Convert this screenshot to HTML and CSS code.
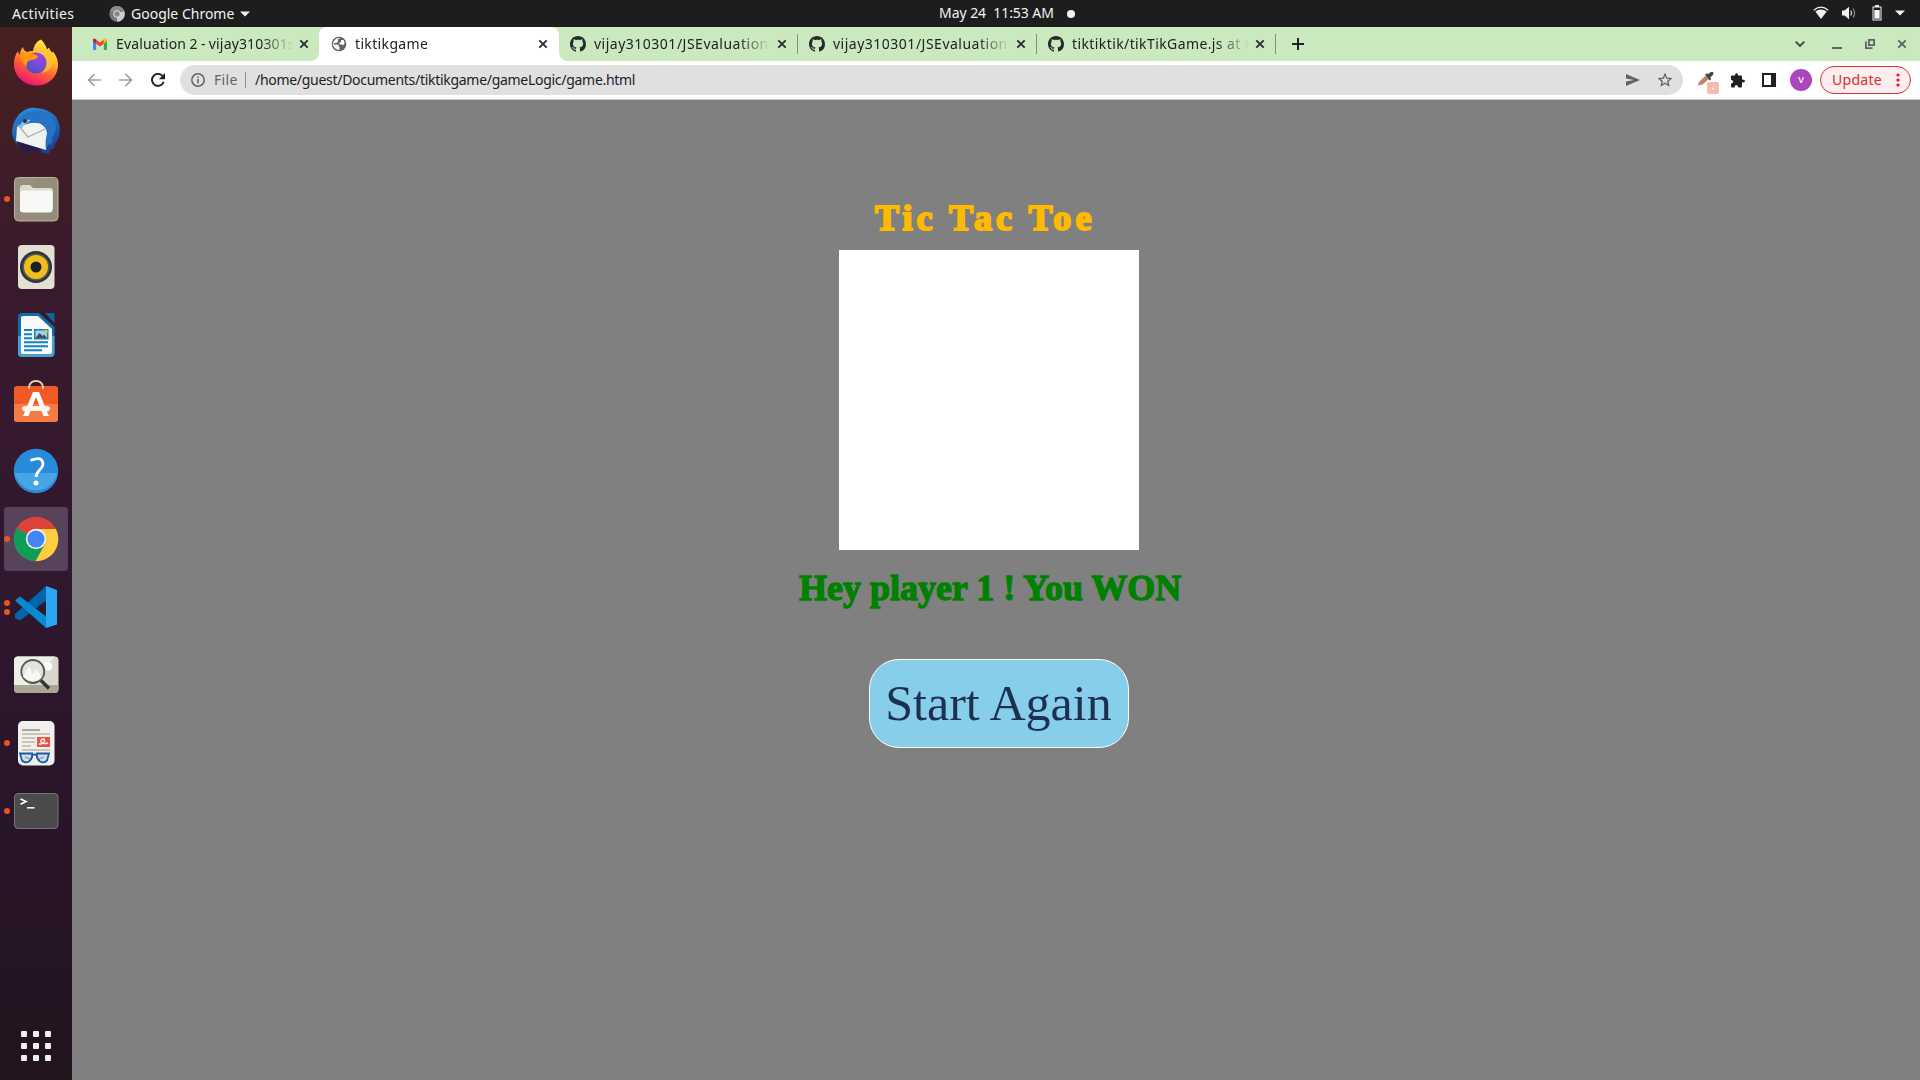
FILE: index.html
```html
<!DOCTYPE html>
<html lang="en">
<head>
<meta charset="utf-8">
<title>tiktikgame</title>
<link rel="stylesheet" href="styles.css">
</head>
<body>
<svg class="sprite" aria-hidden="true">
  <symbol id="close" viewBox="0 0 10 10"><path d="M1.3 1.3l7.4 7.4M8.7 1.3L1.3 8.7" stroke="currentColor" stroke-width="1.9"/></symbol>
  <symbol id="github" viewBox="0 0 16 16"><path fill="#24292f" d="M8 0C3.58 0 0 3.58 0 8c0 3.54 2.29 6.53 5.47 7.59.4.07.55-.17.55-.38 0-.19-.01-.82-.01-1.49-2.01.37-2.53-.49-2.69-.94-.09-.23-.48-.94-.82-1.13-.28-.15-.68-.52-.01-.53.63-.01 1.08.58 1.23.82.72 1.21 1.87.87 2.33.66.07-.52.28-.87.51-1.07-1.78-.2-3.64-.89-3.64-3.95 0-.87.31-1.59.82-2.15-.08-.2-.36-1.02.08-2.12 0 0 .67-.21 2.2.82.64-.18 1.32-.27 2-.27s1.36.09 2 .27c1.53-1.04 2.2-.82 2.2-.82.44 1.1.16 1.92.08 2.12.51.56.82 1.27.82 2.15 0 3.07-1.87 3.75-3.65 3.95.29.25.54.73.54 1.48 0 1.07-.01 1.93-.01 2.2 0 .21.15.46.55.38A8.01 8.01 0 0016 8c0-4.42-3.58-8-8-8z"/></symbol>
</svg>

<header class="topbar">
  <div class="topbar-left">
    <span class="activities">Activities</span>
    <svg class="mono-chrome" width="16" height="16" viewBox="0 0 16 16"><circle cx="8" cy="8" r="7.7" fill="#777"/><path d="M8 8l7-3.5A7.7 7.7 0 018 15.7z" fill="#c9c9c9"/><path d="M8 8L1 4.5A7.7 7.7 0 0115 4.5H8z" fill="#8c8c8c"/><circle cx="8" cy="8" r="3.7" fill="#ddd"/><circle cx="8" cy="8" r="2.7" fill="#888"/></svg>
    <span class="appname">Google Chrome</span>
    <svg width="10" height="6" viewBox="0 0 10 6"><path d="M0 .5h10L5 5.5z" fill="#f2f2f2"/></svg>
  </div>
  <div class="clock"><span class="date">May 24&nbsp; 11:53 AM</span><i class="notify"></i></div>
  <div class="tray">
    <svg width="16" height="14" viewBox="0 0 16 14"><path d="M.8 4.2Q8-1.8 15.200 4.200" fill="none" stroke="#f2f2f2" stroke-width="1.300"/><path d="M2.300 5.600Q8 1.200 13.700 5.600L8 13z" fill="#f2f2f2"/></svg>
    <svg width="16" height="14" viewBox="0 0 16 14"><path d="M1 4.500h2.500L8 .8v12.400L3.500 9.500H1z" fill="#f2f2f2"/><path d="M9.800 4.500q1.600 2.500 0 5" fill="none" stroke="#ddd" stroke-width="1.300"/><path d="M12 2.500q3.200 4.500 0 9" fill="none" stroke="#888" stroke-width="1.200"/></svg>
    <svg width="10" height="16" viewBox="0 0 10 16"><path d="M3 0h4v1.500h2.500v14H.5v-14H3z" fill="#f2f2f2"/><path d="M1.500 2.500h7v12h-7z" fill="#1d1d1d"/><path d="M2.300 5h5.400v8.700H2.300z" fill="#f2f2f2"/></svg>
    <svg width="10" height="6" viewBox="0 0 10 6"><path d="M0 .5h10L5 5.500z" fill="#f2f2f2"/></svg>
  </div>
</header>

<div class="desktop">
  <nav class="dock">
    <div class="app"><svg width="48" height="48" viewBox="0 0 48 48">
      <defs><linearGradient id="fx" x1=".75" y1="0" x2=".3" y2="1"><stop offset="0" stop-color="#fff44f"/><stop offset=".35" stop-color="#ffb52b"/><stop offset=".65" stop-color="#ff5a36"/><stop offset="1" stop-color="#e8107c"/></linearGradient><radialGradient id="fxb" cx=".65" cy=".25" r=".8"><stop offset="0" stop-color="#a43cf0"/><stop offset=".6" stop-color="#6b4fd0"/><stop offset="1" stop-color="#4a52c0"/></radialGradient></defs>
      <path d="M29 .5c3 3 5 6 6 10l2-2c.5 2 1.500 3 3 5l1-1c4 5 5.500 10 5 15C45 39 36 46.500 24.500 46.500S3 38 2 27c-.5-6 1-11 4-15 .5 2 1 3 1.500 4C8.500 12 9 10 11 8c.5 3 2 4 4 5 2-1 4-1 6-1C22 6 25 2 29 .5z" fill="url(#fx)"/>
      <circle cx="24" cy="24" r="10.500" fill="url(#fxb)"/>
      <path d="M8 17c4-3 8-4 14-2l4 2c-1 3-4 4-7 4-4 1-5 4-4 7-4-3-6-7-7-11z" fill="#ff980e"/>
      <path d="M24 14c6-1 10 3 10.500 8 .5 6-2 9-5 12 8-1 13-8 12-16-1-5-5-8-9-9" fill="#ffc533" opacity=".7"/>
    </svg></div>
    <div class="app"><svg width="48" height="48" viewBox="0 0 48 48">
      <defs><linearGradient id="tb" x1=".3" y1="0" x2=".6" y2="1"><stop offset="0" stop-color="#2a8bd8"/><stop offset=".5" stop-color="#1d63b4"/><stop offset="1" stop-color="#1c3e92"/></linearGradient></defs>
      <path d="M18 1c11-1 21 3 26 9 5 8 5 17 1 24l-2 2-1 5-4 2-1 4-6-1-15-2C7 42 0 34 0 24 1 13 8 3 18 1z" fill="url(#tb)"/>
      <path d="M4 34c3 6 7 10 12 13 2 0 1-2 0-3l14 2-2-5z" fill="#281b4a"/>
      <path d="M12 16l20-1 4 9-2 19L4 34l1-14z" fill="#f1f1f2"/><path d="M6 18l10 12 17-8" fill="none" stroke="#aaa" stroke-width="1.200"/>
      <path d="M5 17C9 8 17 3 26 4c10 1 18 8 18 17-1 6-4 9-5 12l3-1-4 6-1-2-3 6c-1-7 0-10 1-16-1-8-8-11-16-10-5 1-7 3-14 1z" fill="#2573c3"/><path d="M7 21c2-7 6-9 12-8-3 3-7 4-9 8z" fill="#79c3ec"/><circle cx="13" cy="14" r="2" fill="#302f3f"/>
    </svg></div>
    <div class="app"><i class="run"></i><svg width="48" height="48" viewBox="0 0 48 48">
      <rect x="2.500" y="2.500" width="43.500" height="43.500" rx="4" fill="#999180" stroke="#b9b29e"/><path d="M3 25L26 3h19v42H3z" fill="#8d8674" opacity=".35"/><path d="M8 13q0-3 3-3h7l3 3h17q3 0 3 3v18H8z" fill="#dedacf"/><rect x="8" y="15.500" width="32.500" height="22" rx="3" fill="#f8f8f7"/>
    </svg></div>
    <div class="app"><svg width="48" height="48" viewBox="0 0 48 48">
      <rect x="6" y="2" width="36.500" height="44" rx="4" fill="#e3dfd3"/><circle cx="24" cy="24" r="16" fill="#30343b"/><circle cx="24" cy="24" r="13.500" fill="#555860"/><circle cx="24" cy="24" r="12" fill="#eec018"/><circle cx="24" cy="24" r="5.500" fill="#1c2026"/>
    </svg></div>
    <div class="app"><svg width="48" height="48" viewBox="0 0 48 48">
      <path d="M10 2h17l15.500 14v26q0 4-4 4H10q-4 0-4-4V6q0-4 4-4z" fill="#0d6fa8"/><path d="M6 25h36.500v17q0 4-4 4H10q-4 0-4-4z" fill="#47a0d3"/><path d="M11 5h15l14 13v23q0 2-2 2H11q-2 0-2-2V7q0-2 2-2z" fill="#f7f9fa"/><path d="M33 2h8q1.500 0 1.500 1.500V12z" fill="#0c679d"/><path d="M12 19h8M12 23.300h8M12 27.300h8M12 31.300h24M12 35.300h24M12 39.300h18" stroke="#1681bd" stroke-width="1.900"/><rect x="22" y="18" width="14.500" height="10.500" fill="#1681bd"/><path d="M23.500 19.500H35v7.500H23.500z" fill="#9dd1ee"/><path d="M23.500 27l4-5 3 3 1.500-1.500 3 3.500z" fill="#454b50"/><circle cx="34" cy="20.500" r="1.800" fill="#efc32d"/>
    </svg></div>
    <div class="app"><svg width="48" height="48" viewBox="0 0 48 48">
      <rect x="2" y="7" width="44" height="36" rx="3" fill="#f15a24"/><path d="M2 25h44v15q0 3-3 3H5q-3 0-3-3z" fill="#f57b45"/><path d="M17 10V8q1-6 7-6t7 6v2" fill="none" stroke="#e9d4ae" stroke-width="1.800"/><path d="M21 13h6l10 24h-5.500L24 18l-7.500 19H11z" fill="#fff"/><rect x="10" y="27" width="28" height="5" rx="2.500" fill="#fff3ec"/>
    </svg></div>
    <div class="app"><svg width="48" height="48" viewBox="0 0 48 48">
      <circle cx="24" cy="24" r="22.200" fill="#278bda"/><path d="M2.500 26h43A22 22 0 012.500 26z" fill="#48a5e5"/><path d="M18.500 13.500q12-5 12.500 3.500c0 6-7 6-7 13" fill="none" stroke="#fff" stroke-width="2.800"/><circle cx="24" cy="36" r="2.500" fill="#fff"/>
    </svg></div>
    <div class="app active"><i class="run"></i><svg width="48" height="48" viewBox="0 0 48 48">
      <circle cx="24" cy="24" r="22.200" fill="#db4437"/><path d="M24 24L4.800 12.900A22.200 22.200 0 0023.500 46.200l9-16z" fill="#0f9d58"/><path d="M24 14h19.900A22.200 22.200 0 0123.500 46.200L33 29z" fill="#ffcd40"/><circle cx="24" cy="24" r="10.200" fill="#f1f1f1"/><circle cx="24" cy="24" r="8.600" fill="#4285f4"/>
    </svg></div>
    <div class="app"><i class="run two"></i><svg width="48" height="48" viewBox="0 0 48 48">
      <path d="M34 3L3 31v4l5 2.500L36 16z" fill="#0065a9"/><path d="M3.500 17l4.500-3.500L36 35l-2 10L3.500 18z" fill="#078bd0"/><path d="M34 3l11 4v34.500L34 45z" fill="#2aa7f3"/>
    </svg></div>
    <div class="app"><svg width="48" height="48" viewBox="0 0 48 48">
      <rect x="2" y="5.500" width="44.500" height="36.500" rx="4" fill="#d7d7cb"/><path d="M6 5.500h37L17 34H2V10q0-4.500 4-4.500z" fill="#efefe8"/><path d="M2 34h44.500v4q0 4-4 4H6q-4 0-4-4z" fill="#aaa595"/><circle cx="36" cy="15.500" r="4.500" fill="#fcfcf8"/><circle cx="20.800" cy="20.500" r="11.500" fill="#e4e4dd" stroke="#53565a" stroke-width="1.800"/><path d="M11 26l6-11 4 8 3-5 6 8q-8 8-19 0z" fill="#f8f8f3"/><path d="M29 29.500l8 8" stroke="#333638" stroke-width="3.500"/>
    </svg></div>
    <div class="app"><i class="run"></i><svg width="48" height="48" viewBox="0 0 48 48">
      <rect x="6" y="2" width="36.500" height="44.500" rx="5" fill="#f0f0ef"/><path d="M10 11h18" stroke="#aea68f" stroke-width="2"/><path d="M10 15h28M10 19h13M10 23h13M10 27h9M10 31h28" stroke="#c9c4b5" stroke-width="2"/><rect x="25" y="18" width="13" height="10" fill="#f24f43"/><path d="M27 25c4 1 8-5 4-5-4 1-3 6 5 4" fill="none" stroke="#fff" stroke-width="1.300"/><path d="M8 34.500h12q1 5-3 8-4 2-7-1zM37 34.500H25q-1 5 3 8 4 2 7-1zM20 36q2.500-1 5 0" fill="#d8dadc" stroke="#165ba8" stroke-width="1.800"/><path d="M13 38l5 2M32 38l-5 2" stroke="#888" stroke-width="1"/>
    </svg></div>
    <div class="app"><i class="run"></i><svg width="48" height="48" viewBox="0 0 48 48">
      <rect x="2.500" y="6.500" width="43.500" height="35" rx="3.500" fill="#4b4b4b" stroke="#747474"/><path d="M8.500 12l5.500 2.600-5.500 2.600" fill="none" stroke="#fff" stroke-width="1.700"/><path d="M15 20.800h7.500" stroke="#fff" stroke-width="1.500"/>
    </svg></div>
    <svg class="grid-icon" width="30" height="30" viewBox="0 0 30 30" fill="#eeeeec"><rect width="6" height="6" rx="1"/><rect x="12" width="6" height="6" rx="1"/><rect x="24" width="6" height="6" rx="1"/><rect y="12" width="6" height="6" rx="1"/><rect x="12" y="12" width="6" height="6" rx="1"/><rect x="24" y="12" width="6" height="6" rx="1"/><rect y="24" width="6" height="6" rx="1"/><rect x="12" y="24" width="6" height="6" rx="1"/><rect x="24" y="24" width="6" height="6" rx="1"/></svg>
  </nav>

  <div class="browser">
    <div class="tabs">
      <div class="tab">
        <svg class="fav" width="16" height="16" viewBox="0 0 16 16"><path d="M1 4l3.200 2.200V14H2q-1 0-1-1z" fill="#4285f4"/><path d="M15 4l-3.200 2.200V14H14q1 0 1-1z" fill="#34a853"/><path d="M4.200 3.500L8 6.400l3.800-2.900v4.200L8 10.500 4.200 7.700z" fill="#ea4335"/><path d="M1 4q0-2 2-1.300l1.200.9v4.100L1 5.300z" fill="#c5221f"/><path d="M15 4q0-2-2-1.300l-1.200.9v4.100L15 5.300z" fill="#fbbc04"/></svg>
        <span class="tab-title t1">Evaluation 2 - vijay310301s</span><svg class="x" width="10" height="10"><use href="#close"/></svg>
      </div>
      <div class="tab current">
        <svg class="fav" width="16" height="16" viewBox="0 0 16 16"><circle cx="8" cy="8" r="7.300" fill="#5f6368"/><path d="M9.500 2.200L7 3.500v2L5.500 7H3.200L2.500 8.500h5V10l1 1v3l-3-.6-3-3-.7-2L2.600 5.300l3-3z" fill="#fff" opacity=".95"/><path d="M10 4h2.500l1.300 3L12 9.500l-1-1H9L8 7l2-1z" fill="#fff"/></svg>
        <span class="tab-title t2">tiktikgame</span><svg class="x" width="10" height="10"><use href="#close"/></svg>
      </div>
      <div class="tab">
        <svg class="fav" width="16" height="16"><use href="#github"/></svg>
        <span class="tab-title t3">vijay310301/JSEvaluation-</span><svg class="x" width="10" height="10"><use href="#close"/></svg>
      </div>
      <div class="tab sep">
        <svg class="fav" width="16" height="16"><use href="#github"/></svg>
        <span class="tab-title t3">vijay310301/JSEvaluation-</span><svg class="x" width="10" height="10"><use href="#close"/></svg>
      </div>
      <div class="tab sep">
        <svg class="fav" width="16" height="16"><use href="#github"/></svg>
        <span class="tab-title t5">tiktiktik/tikTikGame.js at r</span><svg class="x" width="10" height="10"><use href="#close"/></svg>
      </div>
      <div class="newtab sep"><svg width="12" height="12" viewBox="0 0 12 12"><path d="M6 0v12M0 6h12" stroke="#202124" stroke-width="2"/></svg></div>
      <div class="window-controls">
        <svg width="10" height="6" viewBox="0 0 10 6"><path d="M.7.700L5 5 9.300.700" fill="none" stroke="#3c4043" stroke-width="1.800"/></svg>
        <svg width="10" height="10" viewBox="0 0 10 10"><path d="M0 9h10" stroke="#5f6368" stroke-width="2"/></svg>
        <svg width="10" height="10" viewBox="0 0 10 10" fill="none" stroke="#5f6368" stroke-width="1.800"><path d="M3.900.900h5.200v5.200H3.900zM.9 2.500v6.600h6.600"/></svg>
        <svg class="wclose" width="10" height="10"><use href="#close"/></svg>
      </div>
    </div>

    <div class="toolbar">
      <div class="nav">
        <svg width="14" height="14" viewBox="0 0 14 14"><path d="M14 7H1.500M7.500 1L1.500 7l6 6" fill="none" stroke="#a0a0a1" stroke-width="1.700"/></svg>
        <svg width="14" height="14" viewBox="0 0 14 14"><path d="M0 7h12.500M6.500 1l6 6-6 6" fill="none" stroke="#a0a0a1" stroke-width="1.700"/></svg>
        <svg width="14" height="14" viewBox="0 0 14 14"><path d="M11.600 3A6 6 0 1012.700 8.800" fill="none" stroke="#202124" stroke-width="1.900"/><path d="M14 0v6.200H7.800z" fill="#202124"/></svg>
      </div>
      <div class="omnibox">
        <svg width="14" height="14" viewBox="0 0 14 14"><circle cx="7" cy="7" r="6.200" fill="none" stroke="#5f6368" stroke-width="1.500"/><path d="M7 6v4.500M7 3.400v1.500" stroke="#5f6368" stroke-width="1.500"/></svg>
        <span class="scheme">File</span><i class="bar"></i><span class="url">/home/guest/Documents/tiktikgame/gameLogic/game.html</span>
        <svg class="send" width="14" height="12" viewBox="0 0 14 12"><path d="M0 0l14 6-14 6V7.500L8 6 0 4.500z" fill="#5f6368"/></svg>
        <svg width="14" height="14" viewBox="0 0 14 14"><path d="M7 1.300l1.700 3.900 4.200.4-3.200 2.800 1 4.100L7 10.300l-3.700 2.200 1-4.100L1.100 5.600l4.200-.4z" fill="none" stroke="#5f6368" stroke-width="1.300"/></svg>
      </div>
      <div class="actions">
        <svg class="picker" width="24" height="24" viewBox="0 0 24 24"><path d="M3.500 17l1-3L11 7.500l3 3L7.500 16z" fill="#d77a60" stroke="#999" stroke-width="1"/><path d="M10 6l2-.5 1.500.5L15 4.500q3-1.500 3.500.5 0 1.500-1.500 3l-1.500 1 .5 2.500-1.500 1z" fill="#454545"/><rect x="12" y="14" width="12" height="12" rx="2" fill="#f8bbb0"/><circle cx="18" cy="20.500" r="1" fill="#fff"/></svg>
        <svg class="puzzle" width="15" height="15" viewBox="0 0 15 15"><path d="M1 3.500q0-1 1-1h3q-.2-2.300 1.500-2.300T8 2.500h3q1 0 1 1v3q3-.2 3 1.500t-3 1.500v4q0 1-1 1H8.200q0-2.500-1.800-2.500T4.600 14.500H2q-1 0-1-1v-3q2.200 0 2.200-1.800T1 7z" fill="#202124"/></svg>
        <svg class="panel" width="14" height="14" viewBox="0 0 14 14"><path d="M0 0h14v14H0zM2 2v10h7V2z" fill="#202124" fill-rule="evenodd"/></svg>
        <span class="avatar">v</span>
        <div class="update"><span>Update</span><svg width="4" height="14" viewBox="0 0 4 14" fill="#d21e1c"><circle cx="2" cy="2" r="1.600"/><circle cx="2" cy="7" r="1.600"/><circle cx="2" cy="12" r="1.600"/></svg></div>
      </div>
    </div>

    <main class="page">
      <h1 class="heading">Tic Tac Toe</h1>
      <div class="board"></div>
      <h1 class="result">Hey player 1 ! You WON</h1>
      <button class="again">Start Again</button>
    </main>
  </div>
</div>
</body>
</html>
```
FILE: styles.css
```css
* { box-sizing: border-box; }
body { margin: 0; width: 1920px; height: 1080px; overflow: hidden; display: flex; flex-direction: column; font-family: "Noto Sans", sans-serif; font-size: 14px; color: #202124; }
svg { display: block; flex: none; }
span { white-space: nowrap; }
.sprite { position: absolute; width: 0; height: 0; }

.topbar { height: 27px; flex: none; display: grid; grid-template-columns: 1fr auto 1fr; align-items: center; background: #1d1d1d; color: #f2f2f2; }
.topbar-left { display: flex; align-items: center; padding-left: 12px; }
.activities { width: 97px; letter-spacing: 0.4px; }
.appname { width: 104px; margin: 0 5px 0 6px; }
.clock { display: flex; align-items: center; margin-left: 94px; width: 136px; }
.date { width: 128px; line-height: 26px; padding-bottom: 1px; letter-spacing: -0.05px; }
.notify { width: 8px; height: 8px; border-radius: 50%; background: #f2f2f2; flex: none; }
.tray { display: flex; align-items: center; justify-content: flex-end; gap: 12px; padding-right: 15px; }
.tray svg { margin-bottom: 1px; }
.tray svg:nth-child(3) { margin: 0 1px 1px 3px; }

.desktop { flex: 1; display: flex; min-height: 0; }
.dock { width: 72px; display: flex; flex-direction: column; align-items: center; gap: 4px; padding: 4px 0 19px; background: linear-gradient(#48201f, #3b1b2c 20%, #32182f 45%, #29152a 75%, #22141d); }
.app { width: 64px; height: 64px; display: grid; place-items: center; position: relative; border-radius: 4px; }
.app.active { background: #57435a; }
.run { position: absolute; left: 0; top: 29px; width: 6px; height: 6px; border-radius: 50%; background: #e95420; }
.run.two { top: 25px; box-shadow: 0 9px #e95420; }
.grid-icon { margin-top: auto; }

.browser { flex: 1; display: flex; flex-direction: column; min-width: 0; }
.tabs { height: 34px; flex: none; display: flex; background: #cbe9bf; padding-left: 8px; }
.tab { width: 239px; display: flex; align-items: center; padding-left: 12px; position: relative; }
.fav { margin-right: 8px; }
.tab-title { width: 177px; line-height: 22px; -webkit-mask-image: linear-gradient(90deg, #000 145px, transparent 177px); mask-image: linear-gradient(90deg, #000 145px, transparent 177px); }
.t1 { letter-spacing: 0.15px; word-spacing: -0.5px; }
.t2 { letter-spacing: 0.35px; }
.t3 { letter-spacing: 0.5px; }
.t5 { letter-spacing: 0.4px; }
.x { margin-left: 6px; color: #2b2d30; }
.tab.current { width: 240px; margin-right: -1px; background: #fff; border-radius: 8px 8px 0 0; z-index: 1; }
.tab.current::before, .tab.current::after { content: ""; position: absolute; bottom: 0; width: 8px; height: 8px; }
.tab.current::before { left: -8px; background: radial-gradient(circle at 0 0, transparent 7.5px, #fff 8px); }
.tab.current::after { right: -8px; background: radial-gradient(circle at 100% 0, transparent 7.5px, #fff 8px); }
.sep::before { content: ""; position: absolute; left: 0; top: 7px; width: 1px; height: 20px; background: #81917b; }
.newtab { position: relative; width: 45px; display: grid; place-items: center; }
.window-controls { margin-left: auto; display: flex; align-items: center; padding-right: 13px; gap: 22.5px; }
.window-controls svg:first-child { margin-right: 5px; }
.wclose { color: #5f6368; }

.toolbar { height: 39px; flex: none; display: flex; align-items: center; background: #fff; border-bottom: 1px solid #c9c9c9; padding: 0 9px 0 15px; }
.nav { display: flex; gap: 18px; width: 93px; }
.omnibox { width: 1503px; height: 30px; border-radius: 15px; background: #e0e0e0; display: flex; align-items: center; padding: 0 11px; }
.scheme { width: 31px; margin-left: 9px; padding-bottom: 1px; color: #5f6368; letter-spacing: 0.3px; }
.bar { width: 1px; height: 16px; background: #8d9094; margin-right: 9px; }
.url { letter-spacing: -0.29px; padding-bottom: 1px; }
.send { margin-left: auto; margin-right: 18px; }
.actions { flex: 1; display: flex; align-items: center; }
.picker { margin: 0 0 0 12px; overflow: visible; }
.puzzle { margin-left: 11px; }
.panel { margin-left: 17px; }
.avatar { width: 22px; height: 22px; margin-left: 14px; border-radius: 50%; background: #ab47bc; color: #fff; font-size: 11px; text-align: center; line-height: 20px; }
.update { margin-left: auto; width: 91px; height: 28px; border: 1px solid #d3322d; border-radius: 14px; background: #fceeee; color: #d0302c; display: flex; align-items: center; justify-content: space-between; padding: 0 10px 0 11px; }
.update span { padding-bottom: 1px; letter-spacing: 0.3px; }

.page { flex: 1; background: #808080; display: flex; flex-direction: column; align-items: flex-start; font-family: "Liberation Serif", serif; }
.heading, .result { font-size: 36px; line-height: 44px; margin: 0; white-space: nowrap; }
.heading { margin: 96px 0 0 803px; color: #ffb900; letter-spacing: 4.1px; -webkit-text-stroke: 2px #ffb900; }
.board { width: 300px; height: 300px; margin: 10px 0 0 767px; background: #fff; }
.result { margin: 16px 0 0 727px; color: #008000; -webkit-text-stroke: 1.3px #008000; }
.again { width: 260px; height: 89px; margin: 49px 0 0 797px; padding: 0 1px 2px 0; border: 1px solid #fff; border-radius: 30px; background: #87ceeb; color: #1d3050; font: 50px "Liberation Serif", serif; }
```
